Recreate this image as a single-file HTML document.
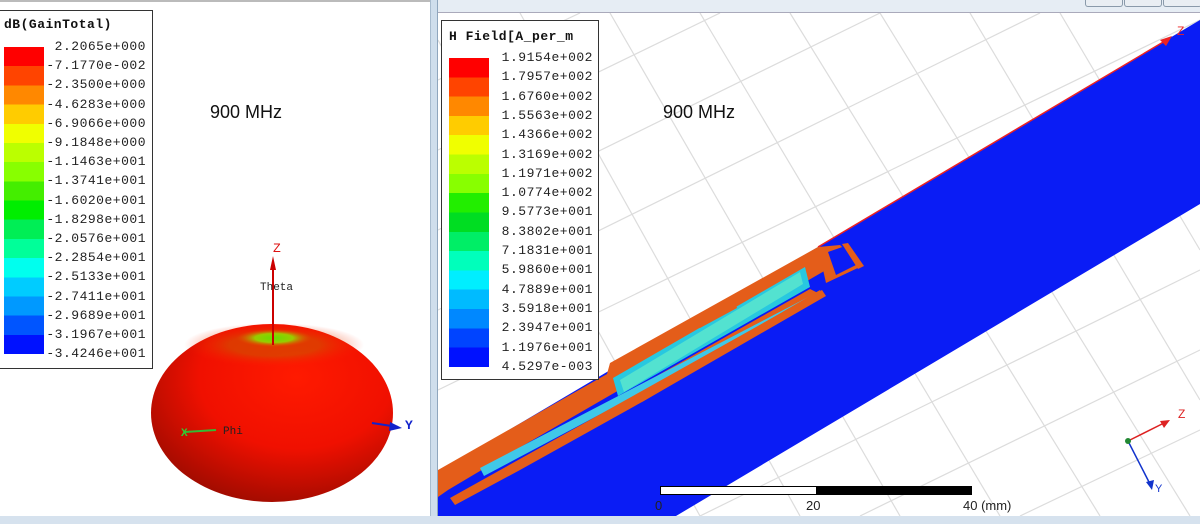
<!DOCTYPE html>
<html><head><meta charset="utf-8"><style>
body{margin:0;width:1200px;height:524px;overflow:hidden;background:#fff;position:relative;font-family:"Liberation Mono",monospace}
.abs{position:absolute}
.lbl{position:absolute;font-size:13px;color:#222;letter-spacing:0.5px;white-space:nowrap;text-align:right}
</style></head><body>
<!-- left panel -->
<div class="abs" style="left:0;top:0;width:430px;height:516px;background:#fff"></div>
<div class="abs" style="left:0;top:0;width:430px;height:2px;background:#bbb"></div>
<svg class="abs" style="left:0;top:0" width="430" height="516">
<defs>
<radialGradient id="dn" cx="0.6" cy="0.3" r="0.8">
<stop offset="0" stop-color="#ff1a00"/><stop offset="0.5" stop-color="#f01000"/><stop offset="1" stop-color="#900a00"/>
</radialGradient>
<radialGradient id="tp" cx="0.5" cy="0.5" r="0.5">
<stop offset="0" stop-color="#66dd00"/><stop offset="0.5" stop-color="#99cc00"/><stop offset="1" stop-color="#ee4400" stop-opacity="0"/>
</radialGradient>
<radialGradient id="rg" cx="0.5" cy="0.5" r="0.5">
<stop offset="0.5" stop-color="#c86000" stop-opacity="0.5"/><stop offset="1" stop-color="#ff2000" stop-opacity="0"/>
</radialGradient>
</defs>
<ellipse cx="272" cy="413" rx="121" ry="89" fill="url(#dn)"/>
<ellipse cx="274" cy="345" rx="90" ry="22" fill="url(#rg)"/>
<ellipse cx="274" cy="338" rx="38" ry="9" fill="url(#tp)"/>
<line x1="273" y1="345" x2="273" y2="262" stroke="#cc0000" stroke-width="2"/>
<polygon points="270,270 276,270 273,256" fill="#cc0000"/>
<text x="273" y="252" font-family="Liberation Mono" font-size="13" fill="#dd1111">Z</text>
<text x="260" y="290" font-family="Liberation Mono" font-size="11" fill="#222">Theta</text>
<line x1="185" y1="432" x2="216" y2="430" stroke="#33bb33" stroke-width="2"/>
<text x="181" y="436" font-family="Liberation Mono" font-size="11" fill="#33cc33" font-weight="bold">X</text>
<text x="223" y="434" font-family="Liberation Mono" font-size="11" fill="#222">Phi</text>
<line x1="372" y1="423" x2="398" y2="427" stroke="#1122cc" stroke-width="2"/>
<polygon points="390,422 402,428 389,431" fill="#1122cc"/>
<text x="405" y="429" font-family="Liberation Mono" font-size="13" fill="#1122cc" font-weight="bold">Y</text>
</svg>
<div class="abs" style="left:0;top:10px;width:152px;height:357px;border:1px solid #333;border-left:none;background:#fff"></div>
<div class="abs" style="left:4px;top:17px;font-size:13px;font-weight:bold;color:#111;letter-spacing:0.5px">dB(GainTotal)</div>
<div class="abs" style="left:4px;top:47px;width:40px;height:307px;background:linear-gradient(#ff0000 0 6.25%,#ff4400 6.25% 12.5%,#ff8800 12.5% 18.75%,#ffcc00 18.75% 25%,#f0ff00 25% 31.25%,#bbff00 31.25% 37.5%,#88ff00 37.5% 43.75%,#44ee00 43.75% 50%,#00ee00 50% 56.25%,#00ee55 56.25% 62.5%,#00ff99 62.5% 68.75%,#00ffee 68.75% 75%,#00ccff 75% 81.25%,#0099ff 81.25% 87.5%,#0055ff 87.5% 93.75%,#0011ff 93.75%)"></div>
<div class="abs" style="left:210px;top:102px;font-family:'Liberation Sans',sans-serif;font-size:18px;color:#111">900 MHz</div>
<!-- frame -->
<div class="abs" style="left:430px;top:0;width:8px;height:524px;background:#cfdeec;border-left:1px solid #a8bccf;border-right:1px solid #8fa6bd;box-sizing:border-box"></div>
<div class="abs" style="left:0;top:516px;width:1200px;height:8px;background:#d6e2ee"></div>
<!-- right panel -->
<div class="abs" style="left:438px;top:0;width:762px;height:12px;background:#e6edf4;border-bottom:1px solid #aab"></div>
<div class="abs" style="left:1085px;top:0;width:36px;height:6px;border:1px solid #8a9aaa;border-top:none;border-radius:0 0 3px 3px;background:#e9eef3"></div>
<div class="abs" style="left:1124px;top:0;width:36px;height:6px;border:1px solid #8a9aaa;border-top:none;border-radius:0 0 3px 3px;background:#e9eef3"></div>
<div class="abs" style="left:1163px;top:0;width:37px;height:6px;border:1px solid #8a9aaa;border-top:none;border-radius:0 0 3px 3px;background:#e9eef3"></div>
<svg class="abs" style="left:438px;top:13px" width="762" height="503" viewBox="438 13 762 503">
<g stroke="#dcdcdc" stroke-width="1.2">
<line x1="438" y1="150" x2="720" y2="13"/><line x1="438" y1="230" x2="880" y2="13"/><line x1="438" y1="310" x2="1040" y2="13"/><line x1="438" y1="390" x2="1200" y2="20"/>
<line x1="438" y1="80" x2="580" y2="13"/>
<line x1="700" y1="516" x2="1200" y2="270"/><line x1="860" y1="516" x2="1200" y2="350"/><line x1="1020" y1="516" x2="1200" y2="430"/>
<line x1="610" y1="13" x2="900" y2="516"/><line x1="700" y1="13" x2="1000" y2="516"/><line x1="790" y1="13" x2="1100" y2="516"/><line x1="880" y1="13" x2="1190" y2="516"/><line x1="970" y1="13" x2="1200" y2="400"/><line x1="1060" y1="13" x2="1200" y2="250"/><line x1="520" y1="13" x2="800" y2="516"/><line x1="438" y1="40" x2="700" y2="516"/>
</g>
<polygon points="438,472 818,247 1200,20 1200,204 676,516 438,516" fill="#0a1cf5"/>
<line x1="818" y1="247" x2="1170" y2="38" stroke="#ee2222" stroke-width="1.5"/>
<polygon points="1160,40 1172,36 1166,46" fill="#ee2222"/>
<text x="1177" y="35" font-family="Liberation Sans" font-size="12" fill="#ee2222">Z</text>
<!-- antenna -->
<polygon points="438,470 607,374 610,363 818,247 826,270 640,378 512,452 448,490 438,497" fill="#e45d1a"/>
<polygon points="613,378 805,267 810,287 618,396" fill="#28c8e0"/>
<polygon points="620,380 800,272 803,284 624,392" fill="#5ee8cc" opacity="0.8"/>
<polygon points="695,322 735,302 737,308 700,328" fill="#e45d1a"/>
<polygon points="618,398 810,289 818,293 620,404" fill="#e45d1a"/>
<polygon points="480,468 816,293 819,298 484,476" fill="#40c8e8"/>
<polygon points="450,498 640,392 822,290 826,296 642,402 520,470 455,505" fill="#e45d1a"/>
<polygon points="640,395 820,290 823,296 642,402" fill="#e45d1a"/>
<polygon points="818,247 840,245 862,266 826,283" fill="#e45d1a"/>
<polygon points="828,252 848,245 856,265 836,275" fill="#0a1cf5"/>
<polygon points="842,244 848,243 864,266 858,269" fill="#e45d1a"/>
</svg>
<div class="abs" style="left:441px;top:20px;width:156px;height:358px;border:1px solid #333;background:#fff"></div>
<div class="abs" style="left:449px;top:29px;font-size:13px;font-weight:bold;color:#111;letter-spacing:0.5px">H Field[A_per_m</div>
<div class="abs" style="left:449px;top:58px;width:40px;height:309px;background:linear-gradient(#ff0000 0 6.25%,#ff4400 6.25% 12.5%,#ff8800 12.5% 18.75%,#ffcc00 18.75% 25%,#f0ff00 25% 31.25%,#bbff00 31.25% 37.5%,#88ff00 37.5% 43.75%,#22ee00 43.75% 50%,#00dd22 50% 56.25%,#00ee66 56.25% 62.5%,#00ffbb 62.5% 68.75%,#00eeff 68.75% 75%,#00bbff 75% 81.25%,#0088ff 81.25% 87.5%,#0044ff 87.5% 93.75%,#0011ff 93.75%)"></div>
<div class="abs" style="left:663px;top:102px;font-family:'Liberation Sans',sans-serif;font-size:18px;color:#111">900 MHz</div>
<div class="abs" style="left:660px;top:486px;width:156px;height:7px;background:#fff;border:1px solid #000"></div>
<div class="abs" style="left:816px;top:486px;width:156px;height:9px;background:#000"></div>
<div class="abs" style="left:655px;top:498px;font-family:'Liberation Sans',sans-serif;font-size:13px;color:#222">0</div>
<div class="abs" style="left:806px;top:498px;font-family:'Liberation Sans',sans-serif;font-size:13px;color:#222">20</div>
<div class="abs" style="left:963px;top:498px;font-family:'Liberation Sans',sans-serif;font-size:13px;color:#222">40 (mm)</div>
<svg class="abs" style="left:1100px;top:400px" width="100" height="100">
<line x1="28" y1="41" x2="66" y2="22" stroke="#dd2222" stroke-width="1.5"/>
<polygon points="60,21 70,20 64,28" fill="#dd2222"/>
<text x="78" y="18" font-family="Liberation Sans" font-size="12" fill="#dd2222">Z</text>
<line x1="28" y1="41" x2="50" y2="84" stroke="#1133cc" stroke-width="1.5"/>
<polygon points="46,82 54,80 52,90" fill="#1133cc"/>
<text x="55" y="92" font-family="Liberation Sans" font-size="11" fill="#1133cc">Y</text>
<circle cx="28" cy="41" r="3" fill="#228833"/>
</svg>
<div id="l1"></div>
<script>
var L=["2.2065e+000","-7.1770e-002","-2.3500e+000","-4.6283e+000","-6.9066e+000","-9.1848e+000","-1.1463e+001","-1.3741e+001","-1.6020e+001","-1.8298e+001","-2.0576e+001","-2.2854e+001","-2.5133e+001","-2.7411e+001","-2.9689e+001","-3.1967e+001","-3.4246e+001"];
var R=["1.9154e+002","1.7957e+002","1.6760e+002","1.5563e+002","1.4366e+002","1.3169e+002","1.1971e+002","1.0774e+002","9.5773e+001","8.3802e+001","7.1831e+001","5.9860e+001","4.7889e+001","3.5918e+001","2.3947e+001","1.1976e+001","4.5297e-003"];
var h="";
for(var i=0;i<17;i++){h+='<div class="lbl" style="right:1054px;top:'+(39+i*19.2)+'px">'+L[i]+'</div>';}
for(var i=0;i<17;i++){h+='<div class="lbl" style="right:607px;top:'+(50+i*19.3)+'px">'+R[i]+'</div>';}
document.getElementById("l1").innerHTML=h;
</script>
</body></html>
